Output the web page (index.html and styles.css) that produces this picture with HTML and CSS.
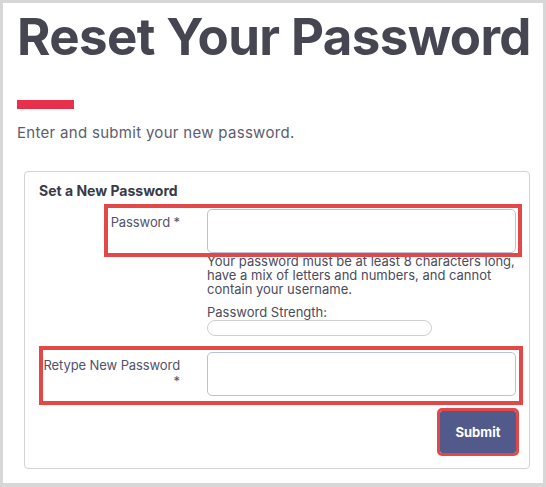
FILE: index.html
```html
<!DOCTYPE html>
<html lang="en">
<head>
<meta charset="utf-8">
<title>Reset Your Password</title>
<link rel="stylesheet" href="styles.css">
</head>
<body>
<div class="page">
  <h1 class="title">Reset Your Password</h1>
  <div class="accent"></div>
  <p class="lead">Enter and submit your new password.</p>
  <form class="card">
    <h2 class="card-title">Set a New Password</h2>
    <div class="field field-pw">
      <label class="label label-pw">Password *</label>
      <input class="input" type="password">
    </div>
    <div class="below">
      <p class="hint">Your password must be at least 8 characters long, have a mix of letters and numbers, and cannot contain your username.</p>
      <div class="strength-label">Password Strength:</div>
      <div class="strength"></div>
    </div>
    <div class="field field-re">
      <label class="label label-re"><span class="nowrap">Retype New Password</span> *</label>
      <input class="input" type="password">
    </div>
    <div class="actions"><button class="btn" type="button">Submit</button></div>
  </form>
</div>
</body>
</html>
```
FILE: styles.css
```css
* { box-sizing: border-box; }
html, body { margin: 0; padding: 0; }
body {
  background: #d7d7d7;
  font-family: Inter, "Noto Sans", sans-serif;
}
.page {
  margin: 3px 3px 4px;
  height: 480px;
  background: #fff;
  padding: 8px 0 0 14px;
}
.title {
  margin: 0;
  font-size: 51px;
  line-height: 51px;
  font-weight: 700;
  color: #464652;
  letter-spacing: -0.6px;
  white-space: nowrap;
}
.accent {
  width: 57px;
  height: 9px;
  background: #e8304a;
  margin-top: 38px;
}
.lead {
  margin: 15px 0 0;
  font-size: 15px;
  line-height: 18px;
  letter-spacing: 0.3px;
  color: #5d5d6c;
}
.card {
  margin: 29px 0 0 7px;
  width: 506px;
  border: 1px solid #d3d3d3;
  border-radius: 4px;
  padding: 10px 13px 15px 14px;
}
.card-title {
  margin: 0;
  font-size: 14px;
  line-height: 18px;
  font-weight: 700;
  color: #3a3a46;
}
.field {
  display: flex;
  align-items: flex-start;
  outline: 4px solid #e24848;
}
.field-pw {
  margin: 8px 0 0 69px;
  width: 410px;
  padding-top: 1px;
}
.field-re {
  margin: 14px 0 0 4px;
  width: 476px;
  padding: 2px 0 5px;
}
.label {
  flex: none;
  text-align: right;
  font-size: 13px;
  line-height: 16px;
  color: #52526a;
  margin-top: 5px;
  letter-spacing: -0.1px;
}
.nowrap { white-space: nowrap; }
.label-pw { width: 72px; }
.label-re { width: 137px; }
.input {
  flex: none;
  margin-left: 27px;
  width: 309px;
  height: 44px;
  border: 1px solid #bcc0dc;
  border-radius: 5px;
  background: #fff;
  padding: 0 10px;
}
.below {
  margin-left: 168px;
  width: 309px;
}
.hint {
  margin: 1px 0 0;
  font-size: 13px;
  line-height: 14px;
  color: #4b4b5b;
}
.strength-label {
  margin-top: 9px;
  font-size: 13px;
  line-height: 14px;
  color: #4b4b5b;
}
.strength {
  margin-top: 1px;
  width: 225px;
  height: 16px;
  border: 1px solid #cfcfcf;
  border-radius: 8px;
}
.actions {
  display: flex;
  justify-content: flex-end;
  margin-top: 10px;
}
.btn {
  width: 76px;
  height: 42px;
  border: none;
  border-radius: 2px;
  background: #525a8b;
  color: #fff;
  font-family: Inter, "Noto Sans", sans-serif;
  font-size: 13px;
  font-weight: 700;
  outline: 3px solid #e24848;
}
```
